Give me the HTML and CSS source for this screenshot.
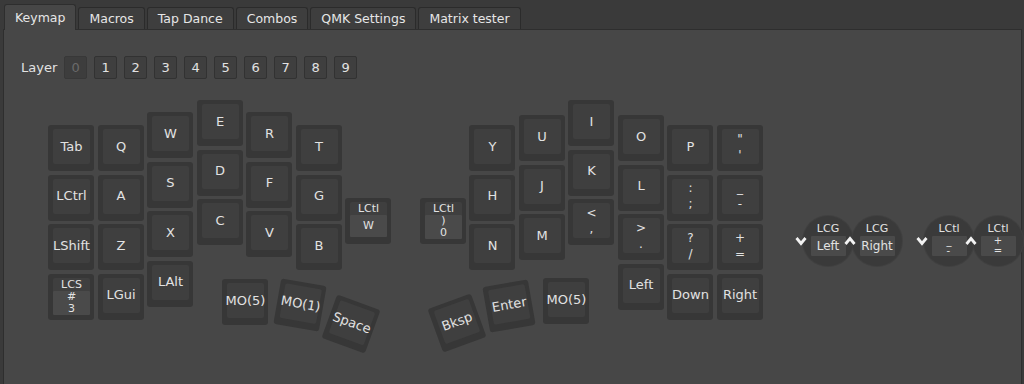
FILE: index.html
```html
<!DOCTYPE html>
<html lang="en">
<head>
  <meta charset="UTF-8" />
  <title>Vial</title>
  <link rel="stylesheet" href="styles.css">
</head>
<body>
  <nav class="tabs">
    <button class="tab active">Keymap</button>
    <button class="tab">Macros</button>
    <button class="tab">Tap Dance</button>
    <button class="tab">Combos</button>
    <button class="tab">QMK Settings</button>
    <button class="tab">Matrix tester</button>
  </nav>

  <main class="pane">
    <div class="layers">
      <span class="layer-label">Layer</span>
      <button class="layer-btn current">0</button>
      <button class="layer-btn">1</button>
      <button class="layer-btn">2</button>
      <button class="layer-btn">3</button>
      <button class="layer-btn">4</button>
      <button class="layer-btn">5</button>
      <button class="layer-btn">6</button>
      <button class="layer-btn">7</button>
      <button class="layer-btn">8</button>
      <button class="layer-btn">9</button>
    </div>
    <div class="board" id="board"></div>
  </main>

  <script>
    const board = document.getElementById('board');
    const ORIGIN_X = 4, ORIGIN_Y = 90, KEY = 46, PITCH = 49.5;

    const keys = [];

    // left half, column stagger
    const leftX = [48, 97.5, 147, 196.5, 246, 295.5];
    const leftY = [125, 125, 112, 100, 112, 125];
    const leftRows = [
      ['Tab', 'Q', 'W', 'E', 'R', 'T'],
      ['LCtrl', 'A', 'S', 'D', 'F', 'G'],
      ['LShift', 'Z', 'X', 'C', 'V', 'B'],
      [{ mod: 'LCS', t: ['#', '3'] }, 'LGui', 'LAlt']
    ];
    leftRows.forEach((row, r) => row.forEach((lbl, c) => {
      keys.push({ x: leftX[c], y: leftY[c] + r * PITCH, l: lbl });
    }));

    // right half
    const rightX = [469, 518.5, 568, 617.5, 667, 716.5];
    const rightY = [125, 115, 100, 115, 125, 125];
    const rightRows = [
      ['Y', 'U', 'I', 'O', 'P', ['"', "'"]],
      ['H', 'J', 'K', 'L', [':', ';'], ['_', '-']],
      ['N', 'M', ['<', ','], ['>', '.'], ['?', '/'], ['+', '=']],
      [null, null, null, 'Left', 'Down', 'Right']
    ];
    rightRows.forEach((row, r) => row.forEach((lbl, c) => {
      if (lbl) keys.push({ x: rightX[c], y: rightY[c] + r * PITCH, l: lbl });
    }));

    // inner columns
    keys.push({ x: 345, y: 198, l: { mod: 'LCtl', t: ['W'] } });
    keys.push({ x: 420, y: 198, l: { mod: 'LCtl', t: [')', '0'] } });

    // thumb clusters (centre + rotation)
    keys.push({ x: 222, y: 279, l: 'MO(5)' });
    keys.push({ cx: 300, cy: 305, r: 10, l: 'MO(1)' });
    keys.push({ cx: 351, cy: 324, r: 20, l: 'Space' });
    keys.push({ cx: 457, cy: 323, r: -20, l: 'Bksp' });
    keys.push({ cx: 509, cy: 306, r: -10, l: 'Enter' });
    keys.push({ x: 543, y: 278, l: 'MO(5)' });

    function label(lbl) {
      if (typeof lbl === 'string') return `<span class="lbl">${lbl}</span>`;
      if (Array.isArray(lbl)) return `<span class="lbl small">${lbl.join('<br>')}</span>`;
      return `<span class="mod">${lbl.mod}</span><span class="tap">${lbl.t.join('<br>')}</span>`;
    }

    keys.forEach(k => {
      const el = document.createElement('div');
      el.className = 'key' + (k.l && k.l.mod ? ' modtap' : '');
      const x = k.cx !== undefined ? k.cx - KEY / 2 : k.x;
      const y = k.cy !== undefined ? k.cy - KEY / 2 : k.y;
      el.style.left = (x - ORIGIN_X) + 'px';
      el.style.top = (y - ORIGIN_Y) + 'px';
      if (k.r) el.style.transform = `rotate(${k.r}deg)`;
      el.innerHTML = `<div class="face">${label(k.l)}</div>`;
      board.appendChild(el);
    });

    // encoders
    const encoders = [
      { cx: 828, mod: 'LCG', t: ['Left'], dir: 'down' },
      { cx: 877, mod: 'LCG', t: ['Right'], dir: 'up' },
      { cx: 949, mod: 'LCtl', t: ['_', '-'], dir: 'down' },
      { cx: 998, mod: 'LCtl', t: ['+', '='], dir: 'up' }
    ];
    const chevron = {
      down: '<svg width="12" height="10" viewBox="0 0 12 10"><polyline points="1.5,2 6,7.5 10.5,2" /></svg>',
      up: '<svg width="12" height="10" viewBox="0 0 12 10"><polyline points="1.5,8 6,2.5 10.5,8" /></svg>'
    };
    encoders.forEach(e => {
      const el = document.createElement('div');
      el.className = 'encoder';
      el.style.left = (e.cx - 25 - ORIGIN_X) + 'px';
      el.style.top = (241 - 25 - ORIGIN_Y) + 'px';
      el.innerHTML = `<span class="mod">${e.mod}</span><span class="tap${e.t.length > 1 ? ' two' : ''}">${e.t.join('<br>')}</span>`;
      board.appendChild(el);

      const arrow = document.createElement('div');
      arrow.className = 'chevron';
      arrow.style.left = (e.cx - 33 - ORIGIN_X) + 'px';
      arrow.style.top = (236 - ORIGIN_Y) + 'px';
      arrow.innerHTML = chevron[e.dir];
      board.appendChild(arrow);
    });
  </script>
</body>
</html>
```

FILE: styles.css
```css
body { margin: 0; background: #3a3a3a; font-family: "DejaVu Sans", sans-serif; color: #e2e2e2; overflow: hidden; height: 384px; }

.tabs { display: flex; gap: 2px; padding: 4px 0 0 4px; height: 25px; position: relative; z-index: 1; }
.tab { font: 12.5px "DejaVu Sans", sans-serif; color: #e6e6e6; background: #3e3e3e; border: 1px solid #2b2b2b; border-bottom: none; border-radius: 3px 3px 0 0; padding: 0 10px; margin-top: 3px; height: 22px; }
.tab.active { background: #474747; margin-top: 0; height: 26px; border-color: #2e2e2e; }

.pane { margin-left: 3px; margin-right: 2px; background: #474747; border: 1px solid #2e2e2e; height: 360px; box-sizing: border-box; }

.layers { display: flex; align-items: center; gap: 7px; padding: 26px 0 0 17px; height: 23px; }
.layer-label { font-size: 13px; margin-right: 0; }
.layer-btn { width: 23px; height: 23px; padding: 0; font: 13px "DejaVu Sans", sans-serif; color: #e2e2e2; background: #3f3f3f; border: 1px solid #323232; border-radius: 2px; }
.layer-btn.current { color: #6a6a6a; background: #3d3d3d; border-color: #383838; }

.board { position: relative; margin-top: 11px; height: 290px; }

.key { position: absolute; width: 46px; height: 46px; box-sizing: border-box; background: #373737; border-radius: 3px; padding: 4px 4px 7px 5px; }
.face { height: 100%; background: #3f3f3f; border-radius: 2px; display: flex; flex-direction: column; align-items: center; justify-content: center; text-align: center; }
.lbl { font-size: 13px; line-height: 14px; }
.lbl.small { font-size: 12px; line-height: 16px; }

.modtap .face { justify-content: flex-start; }
.mod { font-size: 11px; line-height: 13px; }
.tap { align-self: stretch; flex: 1; background: #4a4a4a; font-size: 11px; line-height: 12px; display: flex; align-items: center; justify-content: center; border-radius: 1px; }

.encoder { position: absolute; width: 50px; height: 50px; border-radius: 50%; background: #3a3a3a; box-shadow: 0 0 0 1px #404040; display: flex; flex-direction: column; align-items: center; padding-top: 6px; box-sizing: border-box; }
.encoder .mod { font-size: 11px; line-height: 13px; margin-bottom: 1px; }
.encoder .tap { flex: none; align-self: auto; width: 35px; height: 20px; font-size: 12px; }
.encoder .tap.two { line-height: 10px; font-size: 10px; }

.chevron { position: absolute; width: 12px; height: 10px; }
.chevron svg { display: block; }
.chevron polyline { fill: none; stroke: #f2f2f2; stroke-width: 2.8; }
```
